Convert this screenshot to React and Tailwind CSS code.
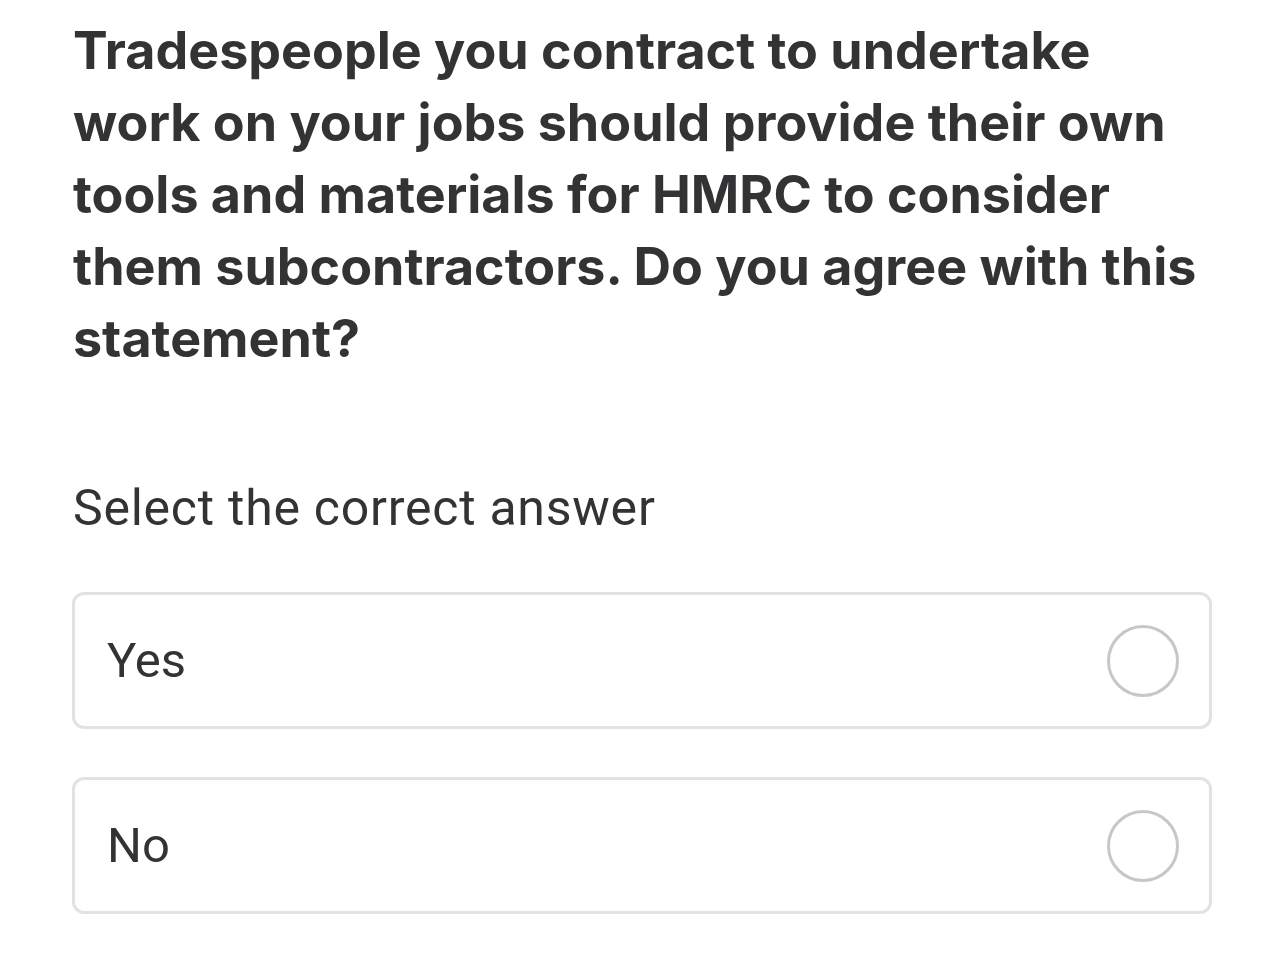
import { useState } from 'react'

const OPTIONS = ['Yes', 'No']

export default function App() {
  const [picked, setPicked] = useState(null)

  return (
    <div className="min-h-[967px] bg-white pl-[72px] pr-[72px] pt-[15px] text-[#333336]">
      <h1 className="ml-[1px] font-['Inter',sans-serif] text-[52px] font-bold leading-[72px]">
        Tradespeople you contract to undertake
        <br />
        work on your jobs should provide their own
        <br />
        tools and materials for HMRC to consider
        <br />
        them subcontractors. Do you agree with this
        <br />
        statement?
      </h1>

      <p className="ml-[1px] mt-[105px] font-['Roboto',sans-serif] text-[50px] leading-[56px] tracking-[0.015em]">
        Select the correct answer
      </p>

      <div className="mt-[56px] flex flex-col gap-[48px]">
        {OPTIONS.map(opt => (
          <button
            key={opt}
            type="button"
            onClick={() => setPicked(opt)}
            className="flex h-[137px] items-center justify-between rounded-[12px] border-[3px] border-[#e1e1e6] bg-white pl-[32px] pr-[30px] text-left"
          >
            <span className="font-['Roboto',sans-serif] text-[49px] leading-none">{opt}</span>
            <span
              className={`size-[72px] shrink-0 rounded-full border-[3px] ${picked === opt ? 'border-[#333336] bg-[#333336]' : 'border-[#c6c6cc]'}`}
            />
          </button>
        ))}
      </div>
    </div>
  )
}
